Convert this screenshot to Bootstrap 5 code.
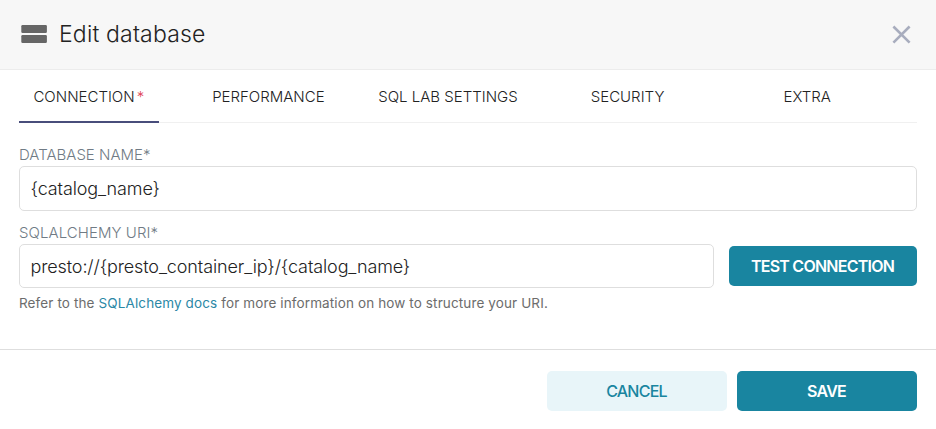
<!DOCTYPE html>
<html lang="en">
<head>
<meta charset="utf-8">
<meta name="viewport" content="width=device-width, initial-scale=1">
<title>Edit database</title>
<link href="https://cdn.jsdelivr.net/npm/bootstrap@5.3.0/dist/css/bootstrap.min.css" rel="stylesheet">
<style>
body{font-family:Inter,"Liberation Sans",sans-serif;color:#222;background:#fff}
.dialog{height:429px}
.dialog-head{height:70px;background:#f7f7f7;border-bottom:1px solid #ececec;padding:0 24px 0 21px}
.head-icon{margin-bottom:1px}
.dialog-title{font-size:23px;font-weight:300;line-height:28px;letter-spacing:.17px;margin:0 0 2px 11px;color:#222}
.db-tabs{margin:0 19px;height:53px;border-bottom:1px solid #f0f0f0}
.db-tabs .nav-item{flex:1 1 0;margin-right:40px}
.db-tabs .nav-link{width:100%;height:53px;padding:1px 0;border-radius:0;color:#222;font-size:15px;font-weight:300;line-height:51px;white-space:nowrap;border:0}
.db-tabs .nav-link.active{border-bottom:2px solid #484d7b;padding:1px 0 0;line-height:51px}
.required-mark{color:#e04355;margin-left:2px}
.db-form{padding:23px 19px 0}
.field-label{display:block;font-size:15px;font-weight:300;line-height:18px;color:#707b85;margin:0 0 2px}
.uri-label{margin-top:13px;letter-spacing:.06px}
.db-form .form-control{height:45px;border:1px solid #dedede;border-radius:5px;padding:0 10.5px;font-size:18px;font-weight:300;letter-spacing:-.12px;color:#222}
.db-form .uri-input{height:44px;margin-right:15px}
.btn-db{height:40px;border:0;border-radius:5px;padding:0 1px 0 0;font-size:16px;font-weight:600;line-height:39px;letter-spacing:-.76px;white-space:nowrap}
.btn-main,.btn-main:hover{background:#1985a0;color:#fff}
.btn-soft,.btn-soft:hover{background:#e8f5f9;color:#1985a0;font-weight:500}
.btn-test{width:188px}
.btn-foot{width:180px}
.help{font-size:13.5px;font-weight:400;line-height:18px;letter-spacing:.12px;margin:6px 0 0;color:#6c6c6c}
.help a{color:#2b88a6;text-decoration:none}
.dialog-foot{height:80px;border-top:1px solid #dedede;padding:21px 19px 0;gap:10px}
</style>
<script src="https://cdn.jsdelivr.net/npm/bootstrap@5.3.0/dist/js/bootstrap.bundle.min.js"></script>
</head>
<body>
<div class="dialog d-flex flex-column">
  <header class="dialog-head d-flex align-items-center flex-shrink-0">
    <svg class="head-icon" width="27" height="18" viewBox="0 0 27 18" fill="#666" aria-hidden="true"><rect x=".3" width="25.6" height="8" rx="1.2"/><rect x=".3" y="10" width="25.6" height="8" rx="1.2"/></svg>
    <h1 class="dialog-title">Edit database</h1>
    <button type="button" class="btn p-0 border-0 ms-auto d-flex" aria-label="Close"><svg width="20" height="20" viewBox="0 0 20 20" fill="none" stroke="#a8adbe" stroke-width="2.6"><path d="M1.4 1.5l16.2 16.2M17.6 1.5L1.4 17.7"/></svg></button>
  </header>
  <ul class="nav db-tabs flex-nowrap flex-shrink-0">
    <li class="nav-item"><a class="nav-link active text-center" href="#">CONNECTION<span class="required-mark">*</span></a></li>
    <li class="nav-item"><a class="nav-link text-center" href="#">PERFORMANCE</a></li>
    <li class="nav-item"><a class="nav-link text-center" href="#">SQL LAB SETTINGS</a></li>
    <li class="nav-item"><a class="nav-link text-center" href="#">SECURITY</a></li>
    <li class="nav-item"><a class="nav-link text-center" href="#">EXTRA</a></li>
  </ul>
  <form class="db-form flex-grow-1">
    <label class="field-label" for="db-name">DATABASE NAME*</label>
    <input class="form-control" id="db-name" type="text" value="{catalog_name}">
    <label class="field-label uri-label" for="db-uri">SQLALCHEMY URI*</label>
    <div class="d-flex align-items-center">
      <input class="form-control uri-input flex-grow-1" id="db-uri" type="text" value="presto://{presto_container_ip}/{catalog_name}">
      <button type="button" class="btn btn-db btn-main btn-test flex-shrink-0">TEST CONNECTION</button>
    </div>
    <p class="help">Refer to the <a href="#">SQLAlchemy docs</a> for more information on how to structure your URI.</p>
  </form>
  <footer class="dialog-foot d-flex justify-content-end flex-shrink-0">
    <button type="button" class="btn btn-db btn-soft btn-foot">CANCEL</button>
    <button type="button" class="btn btn-db btn-main btn-foot">SAVE</button>
  </footer>
</div>
</body>
</html>
